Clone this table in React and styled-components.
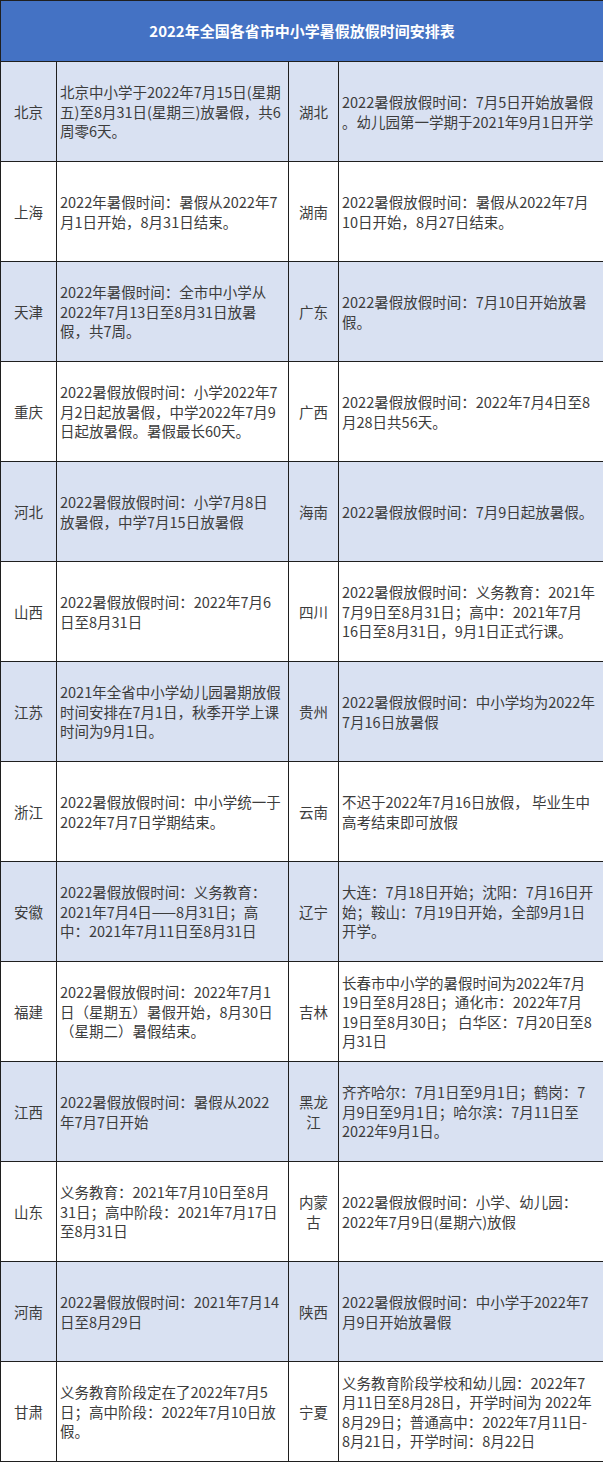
import styled, { createGlobalStyle } from "styled-components";

const GlobalStyle = createGlobalStyle`
  html, body {
    margin: 0;
    padding: 0;
    background: #ffffff;
  }
  body {
    font-family: "Noto Sans CJK SC", "Noto Sans", sans-serif;
  }
`;

const rows = [
  {
    left: "北京",
    leftText: ["北京中小学于2022年7月15日(星期", "五)至8月31日(星期三)放暑假，共6", "周零6天。"],
    right: "湖北",
    rightText: ["2022暑假放假时间：7月5日开始放暑假", "。幼儿园第一学期于2021年9月1日开学"],
  },
  {
    left: "上海",
    leftText: ["2022年暑假时间：暑假从2022年7", "月1日开始，8月31日结束。"],
    right: "湖南",
    rightText: ["2022暑假放假时间：暑假从2022年7月", "10日开始，8月27日结束。"],
  },
  {
    left: "天津",
    leftText: ["2022年暑假时间：全市中小学从", "2022年7月13日至8月31日放暑", "假，共7周。"],
    right: "广东",
    rightText: ["2022暑假放假时间：7月10日开始放暑", "假。"],
  },
  {
    left: "重庆",
    leftText: ["2022暑假放假时间：小学2022年7", "月2日起放暑假，中学2022年7月9", "日起放暑假。暑假最长60天。"],
    right: "广西",
    rightText: ["2022暑假放假时间：2022年7月4日至8", "月28日共56天。"],
  },
  {
    left: "河北",
    leftText: ["2022暑假放假时间：小学7月8日", "放暑假，中学7月15日放暑假"],
    right: "海南",
    rightText: ["2022暑假放假时间：7月9日起放暑假。"],
  },
  {
    left: "山西",
    leftText: ["2022暑假放假时间：2022年7月6", "日至8月31日"],
    right: "四川",
    rightText: ["2022暑假放假时间：义务教育：2021年", "7月9日至8月31日；高中：2021年7月", "16日至8月31日，9月1日正式行课。"],
  },
  {
    left: "江苏",
    leftText: ["2021年全省中小学幼儿园暑期放假", "时间安排在7月1日，秋季开学上课", "时间为9月1日。"],
    right: "贵州",
    rightText: ["2022暑假放假时间：中小学均为2022年", "7月16日放暑假"],
  },
  {
    left: "浙江",
    leftText: ["2022暑假放假时间：中小学统一于", "2022年7月7日学期结束。"],
    right: "云南",
    rightText: ["不迟于2022年7月16日放假， 毕业生中", "高考结束即可放假"],
  },
  {
    left: "安徽",
    leftText: ["2022暑假放假时间：义务教育：", "2021年7月4日——8月31日；高", "中：2021年7月11日至8月31日"],
    right: "辽宁",
    rightText: ["大连：7月18日开始；沈阳：7月16日开", "始；鞍山：7月19日开始，全部9月1日", "开学。"],
  },
  {
    left: "福建",
    leftText: ["2022暑假放假时间：2022年7月1", "日（星期五）暑假开始，8月30日", "（星期二）暑假结束。"],
    right: "吉林",
    rightText: ["长春市中小学的暑假时间为2022年7月", "19日至8月28日；通化市：2022年7月", "19日至8月30日； 白华区：7月20日至8", "月31日"],
  },
  {
    left: "江西",
    leftText: ["2022暑假放假时间：暑假从2022", "年7月7日开始"],
    right: ["黑龙", "江"],
    rightText: ["齐齐哈尔：7月1日至9月1日；鹤岗：7", "月9日至9月1日；哈尔滨：7月11日至", "2022年9月1日。"],
  },
  {
    left: "山东",
    leftText: ["义务教育：2021年7月10日至8月", "31日；高中阶段：2021年7月17日", "至8月31日"],
    right: ["内蒙", "古"],
    rightText: ["2022暑假放假时间：小学、幼儿园：", "2022年7月9日(星期六)放假"],
  },
  {
    left: "河南",
    leftText: ["2022暑假放假时间：2021年7月14", "日至8月29日"],
    right: "陕西",
    rightText: ["2022暑假放假时间：中小学于2022年7", "月9日开始放暑假"],
  },
  {
    left: "甘肃",
    leftText: ["义务教育阶段定在了2022年7月5", "日；高中阶段：2022年7月10日放", "假。"],
    right: "宁夏",
    rightText: ["义务教育阶段学校和幼儿园：2022年7", "月11日至8月28日，开学时间为 2022年", "8月29日；普通高中：2022年7月11日-", "8月21日，开学时间：8月22日"],
  },
];

function Lines({ items }) {
  const list = Array.isArray(items) ? items : [items];
  return list.map((line, i) => (
    <span key={i}>
      {line}
      {i < list.length - 1 && <br />}
    </span>
  ));
}

export default function App() {
  return (
    <>
      <GlobalStyle />
      <Table>
        <colgroup>
          <col style={{ width: 56 }} />
          <col style={{ width: 232 }} />
          <col style={{ width: 50 }} />
          <col style={{ width: 265 }} />
        </colgroup>
        <thead>
          <HeadRow>
            <Title colSpan={4}>2022年全国各省市中小学暑假放假时间安排表</Title>
          </HeadRow>
        </thead>
        <tbody>
          {rows.map((r, i) => (
            <Row key={i} $shaded={i % 2 === 0}>
              <Province>
                <Lines items={r.left} />
              </Province>
              <Detail>
                <Lines items={r.leftText} />
              </Detail>
              <Province>
                <Lines items={r.right} />
              </Province>
              <Detail>
                <Lines items={r.rightText} />
              </Detail>
            </Row>
          ))}
        </tbody>
      </Table>
    </>
  );
}

const Table = styled.table`
  width: 603px;
  table-layout: fixed;
  border-collapse: collapse;
  font-size: 14.5px;
  line-height: 19.5px;
  color: #3c3c3c;
`;

const HeadRow = styled.tr`
  height: 61px;
  background: #4472c4;
`;

const Title = styled.th`
  border: 1px solid #1f1f1f;
  color: #ffffff;
  font-size: 15px;
  font-weight: 700;
  text-align: center;
  vertical-align: middle;
  padding: 0;
`;

const Row = styled.tr`
  height: 100px;
  background: ${(p) => (p.$shaded ? "#d9e1f2" : "#ffffff")};
`;

const Province = styled.td`
  border: 1px solid #1f1f1f;
  text-align: center;
  vertical-align: middle;
  padding: 0;
  white-space: nowrap;
`;

const Detail = styled.td`
  border: 1px solid #1f1f1f;
  text-align: left;
  vertical-align: middle;
  padding: 0 0 0 3px;
  white-space: nowrap;
  overflow: hidden;
`;
